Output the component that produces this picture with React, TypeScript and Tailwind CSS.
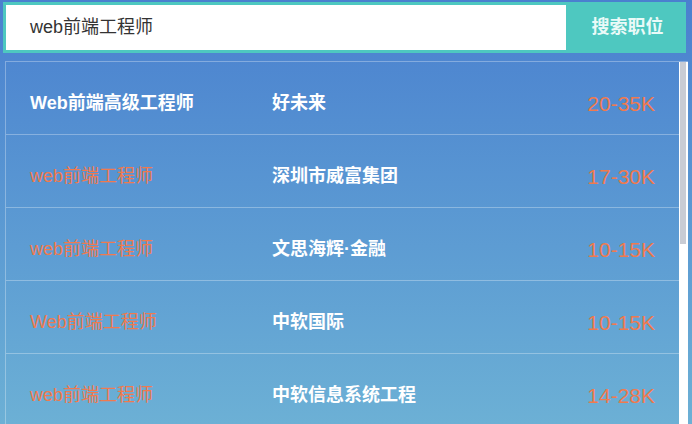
const jobs = [
  { title: "Web前端高级工程师", company: "好未来", salary: "20-35K", active: true },
  { title: "web前端工程师", company: "深圳市威富集团", salary: "17-30K" },
  { title: "web前端工程师", company: "文思海辉·金融", salary: "10-15K" },
  { title: "Web前端工程师", company: "中软国际", salary: "10-15K" },
  { title: "web前端工程师", company: "中软信息系统工程", salary: "14-28K" },
];

const font = "font-['Liberation_Sans','Noto_Sans_CJK_SC',sans-serif]";

export default function App() {
  return (
    <div
      className={`h-[424px] w-[692px] overflow-hidden bg-gradient-to-b from-[#4a80cf] to-[#6cb0d5] ${font}`}
    >
      <div className="flex h-[61px] pl-[3px] pr-[6px] pt-[2px] pb-[8px]">
        <div className="flex flex-1 border-[3px] border-[#4ec8c0] bg-white">
          <div className="flex flex-1 items-center pl-[24px] text-[18px] text-[#333]">
            web前端工程师
          </div>
        </div>
        <button className="w-[117px] bg-[#4ec8c0] text-[18px] font-bold text-[#eafaf8]">
          搜索职位
        </button>
      </div>
      <div className="ml-[5px] mr-[4px] flex h-[363px] border-l border-t border-white/30">
        <div className="flex-1">
          {jobs.map((job, i) => (
            <div
              key={i}
              className="flex h-[73px] items-center border-b border-white/30 pl-[24px] pr-[24px] pt-[11px]"
            >
              <div
                className={`w-[242px] text-[18px] ${
                  job.active ? "font-bold text-white" : "text-[#f07a4e]"
                }`}
              >
                {job.title}
              </div>
              <div className="flex-1 text-[18px] font-bold text-white">{job.company}</div>
              <div className="text-[21px] text-[#f07a4e]">{job.salary}</div>
            </div>
          ))}
        </div>
        <div className="flex w-[9px] flex-col bg-white pl-[1px] pr-[2px]">
          <div className="h-[182px] bg-[#c9ccd4]"></div>
        </div>
      </div>
    </div>
  );
}
